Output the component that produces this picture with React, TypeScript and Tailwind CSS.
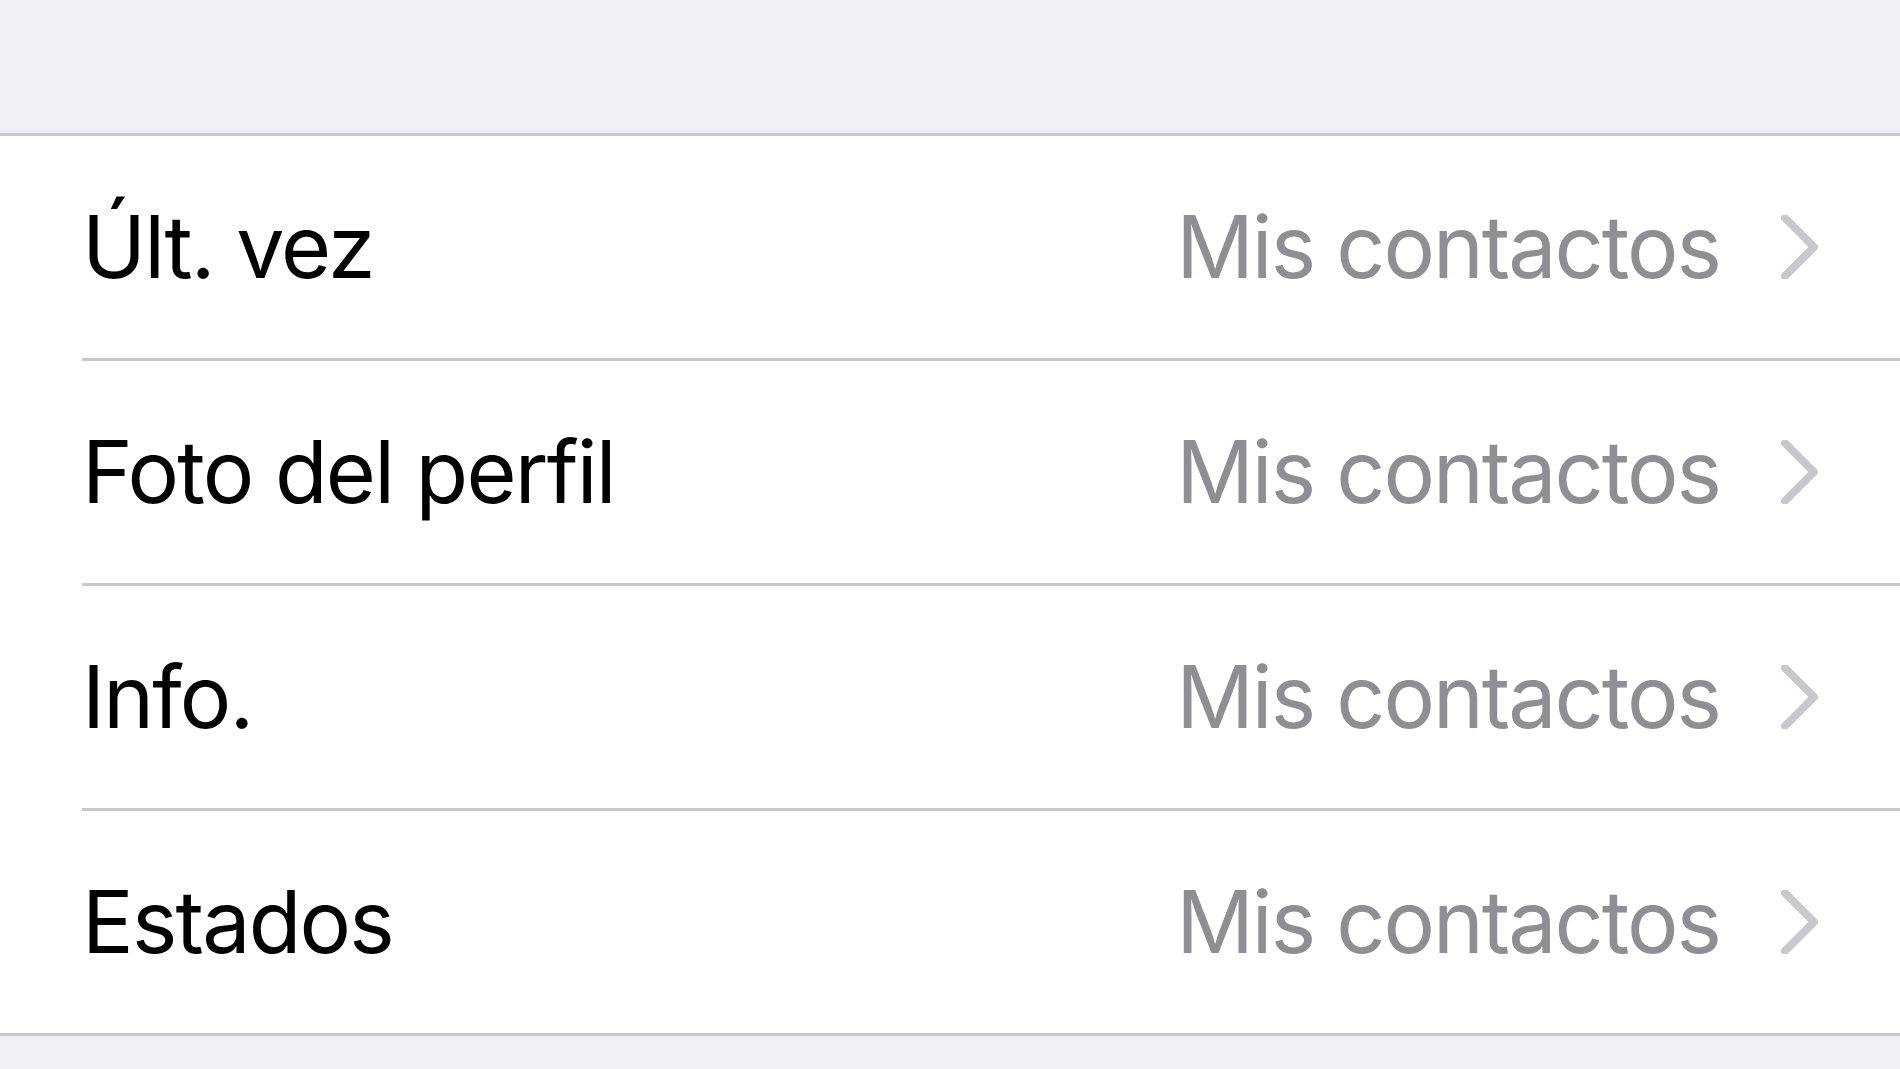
import React from "react";

const rows = ["Últ. vez", "Foto del perfil", "Info.", "Estados"];

function Chevron() {
  return (
    <svg width="40" height="64" viewBox="0 0 40 64" className="shrink-0">
      <polyline
        points="5,3 34,32 5,61"
        fill="none"
        stroke="#c7c7cc"
        strokeWidth="8"
        strokeLinecap="round"
        strokeLinejoin="round"
      />
    </svg>
  );
}

export default function App() {
  return (
    <div
      className="w-[1900px] h-[1069px] bg-[#efeff4] overflow-hidden flex flex-col"
      style={{ fontFamily: "Inter, 'Liberation Sans', sans-serif" }}
    >
      <div className="h-[133px] shrink-0" />
      <div className="bg-white border-y-[3px] border-[#c8c7cc] flex flex-col">
        {rows.map((label, i) => (
          <div key={label} className="pl-[82px] flex flex-col">
            <div className="h-[222px] flex items-center pr-[80px]">
              <span className="text-[86px] text-black flex-1 leading-none tracking-[-1.8px]">{label}</span>
              <span className="text-[86px] text-[#8e8e93] leading-none tracking-[-2px] mr-[60px]">Mis contactos</span>
              <Chevron />
            </div>
            {i < rows.length - 1 && <div className="h-[3px] bg-[#c8c7cc]" />}
          </div>
        ))}
      </div>
    </div>
  );
}
